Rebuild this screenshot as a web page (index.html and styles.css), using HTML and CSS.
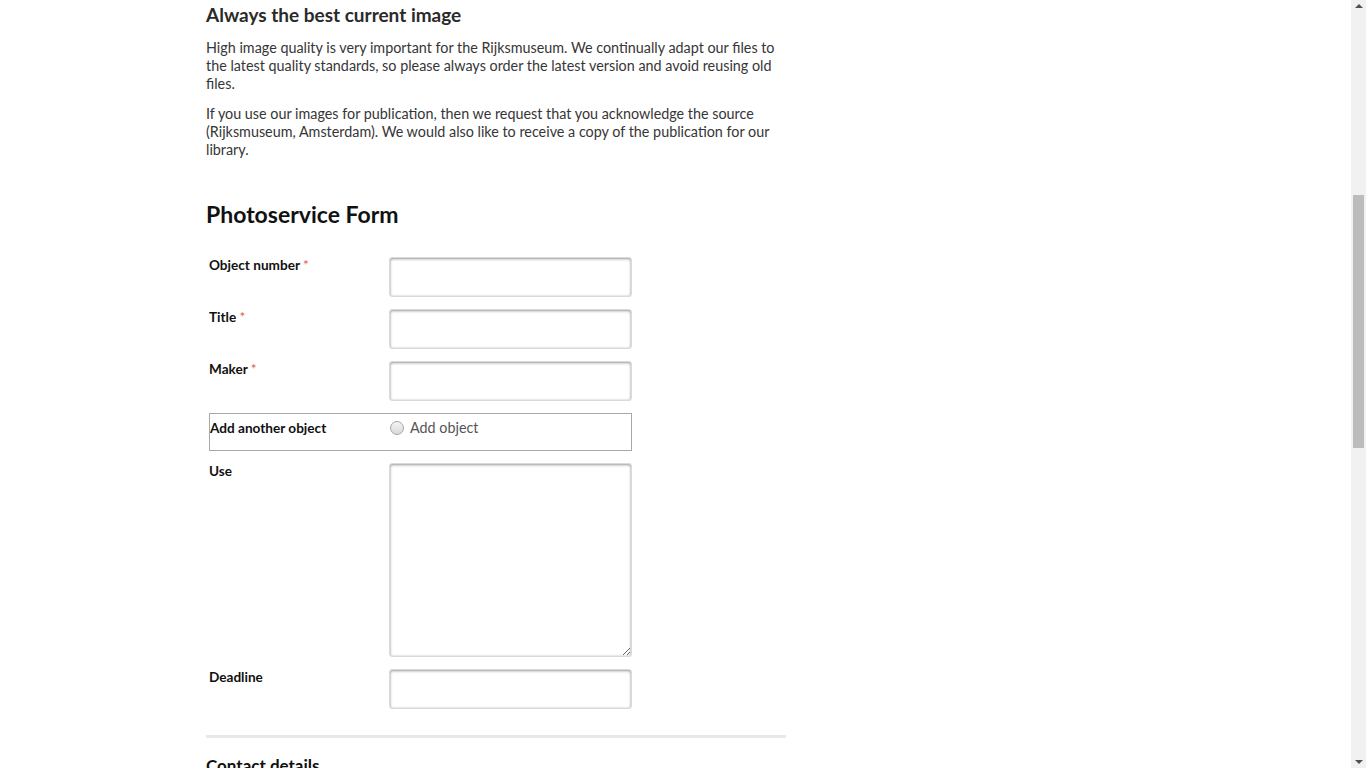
FILE: index.html
```html
<!DOCTYPE html>
<html lang="en">
<head>
<meta charset="utf-8">
<title>Photoservice Form</title>
<link rel="stylesheet" href="styles.css">
</head>
<body>
<div class="viewport">
  <div class="page">
    <div class="content">
      <h2 class="section-title">Always the best current image</h2>
      <p>High image quality is very important for the Rijksmuseum. We continually adapt our files to the latest quality standards, so please always order the latest version and avoid reusing old files.</p>
      <p>If you use our images for publication, then we request that you acknowledge the source (Rijksmuseum, Amsterdam). We would also like to receive a copy of the publication for our library.</p>

      <h2 class="form-title">Photoservice Form</h2>
      <form class="form">
        <div class="row">
          <label class="label">Object number <span class="req">*</span></label>
          <input class="field" type="text">
        </div>
        <div class="row">
          <label class="label">Title <span class="req">*</span></label>
          <input class="field" type="text">
        </div>
        <div class="row">
          <label class="label">Maker <span class="req">*</span></label>
          <input class="field" type="text">
        </div>
        <div class="row row-boxed">
          <span class="label label-boxed">Add another object</span>
          <label class="radio-opt"><span class="radio"></span>Add object</label>
        </div>
        <div class="row">
          <label class="label">Use</label>
          <textarea class="field area"></textarea>
        </div>
        <div class="row">
          <label class="label">Deadline</label>
          <input class="field" type="text">
        </div>
      </form>
      <hr class="divider">
      <h3 class="sub-title">Contact details</h3>
    </div>
  </div>
  <div class="scrollbar">
    <div class="arrow arrow-up"></div>
    <div class="track"><div class="thumb"></div></div>
    <div class="arrow arrow-down"></div>
  </div>
</div>
</body>
</html>
```

FILE: styles.css
```css
* { box-sizing: border-box; }
html, body {
  margin: 0;
  padding: 0;
  height: 768px;
  overflow: hidden;
  background: #fff;
}
body {
  font-family: Lato, "Liberation Sans", sans-serif;
  font-size: 14px;
  line-height: 18px;
  color: #333;
}
.viewport {
  display: flex;
  height: 768px;
}
.page {
  flex: 1;
  overflow: hidden;
}
.content {
  width: 580px;
  margin-left: 206px;
  padding-top: 3px;
}
.section-title {
  margin: 0 0 12px;
  font-size: 19px;
  line-height: 24px;
  font-weight: 700;
  color: #2a2a2a;
}
p {
  margin: 0 0 12px;
  font-size: 14.35px;
  color: #363636;
}
.form-title {
  margin: 41px 0 29px;
  font-size: 23px;
  line-height: 28px;
  font-weight: 700;
  color: #111;
}
.form {
  display: flex;
  flex-direction: column;
  gap: 12px;
}
.row {
  display: flex;
  align-items: flex-start;
  padding-left: 3px;
}
.label {
  width: 180px;
  font-weight: 700;
  font-size: 13.6px;
  color: #111;
  line-height: 16px;
}
.req { color: #e05a45; font-weight: 400; }
.field {
  width: 243px;
  height: 40px;
  margin: 0;
  border: 1px solid #dadada;
  border-radius: 3px;
  background: #fff;
  box-shadow: inset 0 1px 3px rgba(0,0,0,0.38), inset 0 0 2px rgba(0,0,0,0.12);
  font: inherit;
  padding: 4px 6px;
}
.area {
  height: 194px;
  resize: vertical;
  display: block;
}
.row-boxed {
  margin-left: 3px;
  padding: 5px 0 0;
  width: 423px;
  height: 38px;
  border: 1px solid #a8a8a8;
}
.label-boxed { line-height: 18px; }
.radio-opt {
  display: flex;
  align-items: center;
  gap: 6px;
  color: #555;
  font-size: 14.35px;
  line-height: 18px;
}
.radio {
  width: 14px;
  height: 14px;
  border-radius: 50%;
  border: 1px solid #a5a5a5;
  background: linear-gradient(#f4f4f4, #d9d9d9);
  margin-top: -1px;
}
.divider {
  margin: 26px 0 0;
  border: 0;
  height: 3px;
  background: #e8e8e8;
}
.sub-title {
  margin: 17px 0 0;
  font-size: 17px;
  line-height: 22px;
  font-weight: 700;
  color: #111;
}
.scrollbar {
  width: 15px;
  background: #f1f1f1;
  display: flex;
  flex-direction: column;
  align-items: center;
}
.arrow {
  width: 0;
  height: 0;
  border-left: 4px solid transparent;
  border-right: 4px solid transparent;
}
.arrow-up { border-bottom: 4px solid #505050; margin: 4px 0 5px; }
.arrow-down { border-top: 4px solid #505050; margin: 5px 0 4px; }
.track {
  flex: 1;
  width: 100%;
  padding: 182px 2px 0;
}
.thumb {
  height: 253px;
  background: #bcbcbc;
}
```
